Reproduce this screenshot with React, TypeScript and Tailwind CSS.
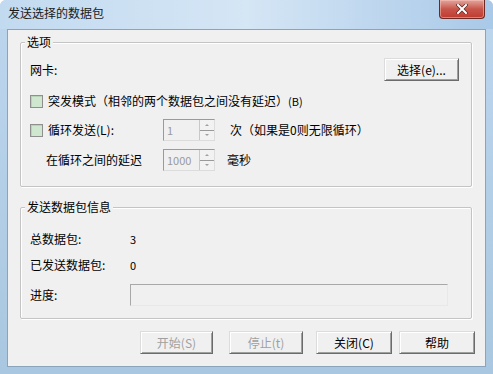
import React from "react";

const font = { fontFamily: '"Noto Sans CJK SC", "Microsoft YaHei", sans-serif' };

function Btn({ children, disabled, className = "" }: { children: React.ReactNode; disabled?: boolean; className?: string }) {
  return (
    <div
      className={`flex items-center justify-center h-[23px] border border-t-[#dcdcdc] border-l-[#dcdcdc] border-r-[#6b6b6b] border-b-[#6b6b6b] bg-[#f0f0f0] shadow-[inset_1px_1px_0_#ffffff,inset_-1px_-1px_0_#a0a0a0] text-[12px] ${
        disabled ? "text-[#a0a0a0]" : "text-[#000]"
      } ${className}`}
    >
      {children}
    </div>
  );
}

function Check() {
  return <div className="w-[13px] h-[13px] border border-[#8f8f8f] bg-[#cfe6cf] shadow-[inset_1px_1px_0_#b9d3b9]" />;
}

function Spin({ value }: { value: string }) {
  return (
    <div className="flex w-[52px] h-[22px] border border-t-[#9a9a9a] border-l-[#9a9a9a] border-r-[#dcdcdc] border-b-[#dcdcdc] bg-[#f0f0f0]">
      <div className="flex-1 flex items-center pl-[3px] text-[11px] text-[#9a9a9a]">{value}</div>
      <div className="w-[15px] flex flex-col border-l border-[#c8c8c8]">
        <div className="flex-1 flex items-center justify-center border-b border-[#9a9a9a] bg-[#f2f2f2]">
          <div className="w-0 h-0 border-l-[2px] border-r-[2px] border-b-[2px] border-l-transparent border-r-transparent border-b-[#a0a0a0]" />
        </div>
        <div className="flex-1 flex items-center justify-center bg-[#f2f2f2]">
          <div className="w-0 h-0 border-l-[2px] border-r-[2px] border-t-[2px] border-l-transparent border-r-transparent border-t-[#a0a0a0]" />
        </div>
      </div>
    </div>
  );
}

function Group({ title, className = "", children }: { title: string; className?: string; children: React.ReactNode }) {
  return (
    <div className={`relative border border-[#c4c4c4] rounded-[2px] shadow-[inset_1px_1px_0_#ffffff,1px_1px_0_#ffffff] ${className}`}>
      <div className="absolute -top-[9px] left-[4px] px-[2px] bg-[#f0f0f0] text-[12px] leading-[16px]">{title}</div>
      {children}
    </div>
  );
}

export default function App() {
  return (
    <div
      className="w-[493px] h-[374px] flex flex-col bg-gradient-to-b from-[#bcd6ee] via-[#b3cfe7] to-[#a9c7e0] rounded-t-[6px] overflow-hidden"
      style={font}
    >
      <div className="h-[29px] flex items-start bg-gradient-to-r from-[#c2daf0] via-[#d5e6f5] to-[#a9c9e8] relative">
        <div className="pl-[8px] pt-[5px] text-[12px] leading-[16px] text-[#1a1a1a]">发送选择的数据包</div>
        <div className="ml-auto mr-[8px] w-[46px] h-[19px] rounded-b-[4px] border border-t-0 border-[#6d2a24] bg-gradient-to-b from-[#e0a69e] via-[#c8554a] to-[#c0392f] flex items-center justify-center shadow-[inset_0_0_0_1px_rgba(255,200,190,0.5)]">
          <svg width="12" height="10" viewBox="0 0 12 10">
            <path d="M2 1 L10 9 M10 1 L2 9" stroke="#5a2a24" strokeWidth="3.4" strokeLinecap="square" />
            <path d="M2 1 L10 9 M10 1 L2 9" stroke="#ffffff" strokeWidth="2" strokeLinecap="square" />
          </svg>
        </div>
      </div>
      <div className="flex-1 mx-[7px] mb-[7px] border border-[#8aa4bc] bg-[#f0f0f0] flex flex-col text-[12px] text-black">
        <Group title="选项" className="ml-[12px] mt-[12px] w-[452px] h-[145px]">
          <div className="flex flex-col pl-[9px] pr-[12px]">
            <div className="flex items-center h-[23px] mt-[15px]">
              <span>网卡:</span>
              <Btn className="ml-auto w-[75px]">选择(e)...</Btn>
            </div>
            <div className="flex items-center h-[22px] mt-[9px]">
              <Check />
              <span className="ml-[5px]">突发模式（相邻的两个数据包之间没有延迟）<span className="text-[11px]">(B)</span></span>
            </div>
            <div className="flex items-center h-[22px] mt-[7px]">
              <div className="w-[133px] flex items-center">
                <Check />
                <span className="ml-[5px]">循环发送(L):</span>
              </div>
              <Spin value="1" />
              <span className="ml-[15px]">次（如果是0则无限循环）</span>
            </div>
            <div className="flex items-center h-[22px] mt-[8px]">
              <div className="w-[133px] pl-[16px]">在循环之间的延迟</div>
              <Spin value="1000" />
              <span className="ml-[12px]">毫秒</span>
            </div>
          </div>
        </Group>
        <Group title="发送数据包信息" className="ml-[12px] mt-[20px] w-[452px] h-[112px]">
          <div className="flex flex-col pl-[9px]">
            <div className="flex items-center h-[20px] mt-[21px]">
              <span className="w-[100px]">总数据包:</span>
              <span className="text-[11px]">3</span>
            </div>
            <div className="flex items-center h-[20px] mt-[6px]">
              <span className="w-[100px]">已发送数据包:</span>
              <span className="text-[11px]">0</span>
            </div>
            <div className="flex items-center h-[22px] mt-[9px]">
              <span className="w-[100px]">进度:</span>
              <div className="w-[318px] h-[22px] border border-[#a8a8a8] border-r-[#e8e8e8] border-b-[#e8e8e8] bg-[#f0f0f0]" />
            </div>
          </div>
        </Group>
        <div className="flex mt-[12px] ml-[132px] h-[23px]">
          <Btn disabled className="w-[73px]">开始(S)</Btn>
          <Btn disabled className="w-[74px] ml-[16px]">停止(t)</Btn>
          <Btn className="w-[76px] ml-[13px]">关闭(C)</Btn>
          <Btn className="w-[76px] ml-[7px]">帮助</Btn>
        </div>
      </div>
    </div>
  );
}
